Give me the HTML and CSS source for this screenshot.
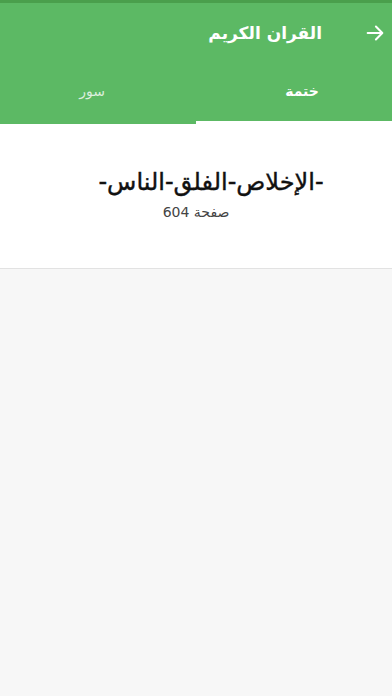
FILE: index.html
```html
<!DOCTYPE html>
<html lang="ar" dir="rtl">
<head>
<meta charset="utf-8">
<link rel="stylesheet" href="styles.css">
</head>
<body>
<div class="status"></div>
<header class="appbar">
  <div class="toolbar">
    <span class="back"><svg width="22" height="22" viewBox="0 0 24 24"><path d="M4 12h15M13 5l7 7-7 7" fill="none" stroke="#fff" stroke-width="2.2" stroke-linecap="round" stroke-linejoin="round"/></svg></span>
    <h1 class="title">القران الكريم</h1>
  </div>
  <nav class="tabs">
    <div class="tab active">ختمة</div>
    <div class="tab other">سور</div>
  </nav>
</header>
<main>
  <section class="card">
    <div class="surahs">-الإخلاص-الفلق-الناس-</div>
    <div class="page">صفحة 604</div>
  </section>
</main>
</body>
</html>
```
FILE: styles.css
```css
html, body { margin: 0; padding: 0; }
body {
  width: 392px; height: 696px; overflow: hidden;
  background: #f7f7f7;
  font-family: "DejaVu Sans", "Noto Sans", sans-serif;
}
.status { height: 3px; background: #4a9f4c; }
.appbar { background: #5cb964; color: #fff; }
.toolbar { height: 60px; display: flex; align-items: center; padding: 0; }
.back { width: 34px; display: flex; justify-content: center; margin-left: 36px; }
.back svg { display: block; }
.title { margin: 0; font-size: 17px; font-weight: bold; }
.tabs { display: flex; height: 61px; }
.tab { flex: 0 0 50%; display: flex; align-items: center; justify-content: center; font-size: 14px; color: rgba(255,255,255,0.78); border-bottom: 3px solid transparent; padding-bottom: 2px; box-sizing: border-box; }
.tab.active { color: #fff; font-weight: bold; border-bottom-color: #fff; padding-left: 16px; }
.tab.other { padding-right: 12px; }
.card { background: #fff; height: 144px; border-bottom: 1px solid #e2e2e2; display: flex; flex-direction: column; align-items: center; justify-content: center; }
.surahs { font-size: 24px; font-weight: normal; color: #111; -webkit-text-stroke: 0.4px #111; padding-left: 30px; margin-top: -4px; }
.page { font-size: 14px; color: #444; margin-top: 8px; }
```
